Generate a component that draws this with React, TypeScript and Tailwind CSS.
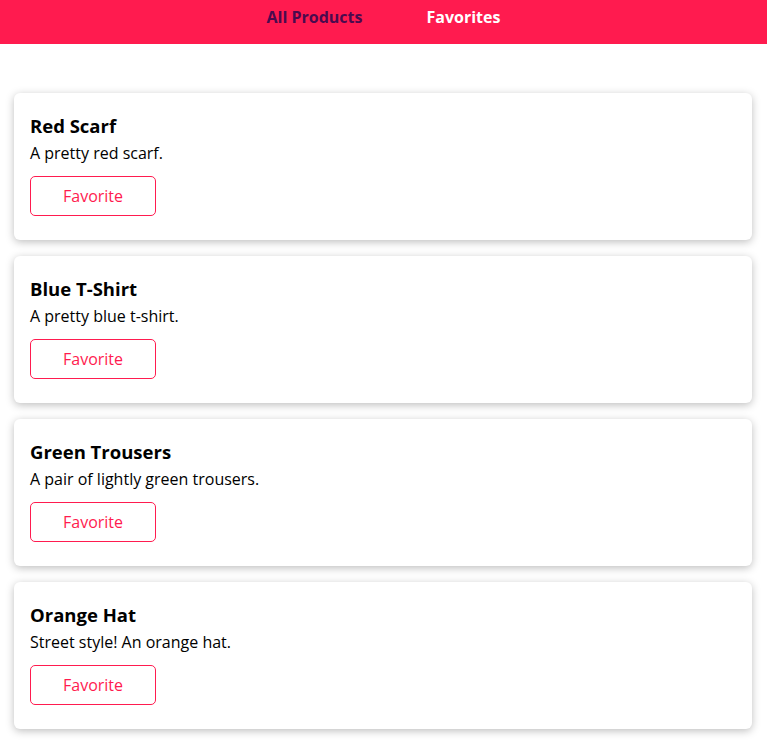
const products = [
  { id: "p1", title: "Red Scarf", description: "A pretty red scarf." },
  { id: "p2", title: "Blue T-Shirt", description: "A pretty blue t-shirt." },
  { id: "p3", title: "Green Trousers", description: "A pair of lightly green trousers." },
  { id: "p4", title: "Orange Hat", description: "Street style! An orange hat." },
];

function Navigation() {
  return (
    <header className="w-full h-[44px] bg-[#ff1b4f]">
      <nav className="h-full">
        <ul className="h-full flex items-center justify-center gap-16 pb-[10px]">
          <li>
            <a href="#" className="font-bold text-[16px] text-[#4b0a4e]">
              All Products
            </a>
          </li>
          <li>
            <a href="#" className="font-bold text-[16px] text-white">
              Favorites
            </a>
          </li>
        </ul>
      </nav>
    </header>
  );
}

function ProductItem({ title, description }: { title: string; description: string }) {
  return (
    <li className="bg-white rounded-[6px] shadow-[0_2px_8px_rgba(0,0,0,0.26)] px-4 pt-[18px] pb-6">
      <h2 className="text-[18.5px] font-bold leading-[30px] text-black">{title}</h2>
      <p className="text-[16px] leading-[24px] text-black">{description}</p>
      <button className="mt-[11px] w-[126px] h-[40px] rounded-[5px] border border-[#ff1b4f] text-[#ff1b4f] text-[16px] bg-white">
        Favorite
      </button>
    </li>
  );
}

export default function App() {
  return (
    <div className="min-h-screen bg-white font-['Open_Sans',sans-serif]">
      <Navigation />
      <main className="pt-[49px] pl-[14px] pr-[15px]">
        <ul className="flex flex-col gap-4">
          {products.map((p) => (
            <ProductItem key={p.id} title={p.title} description={p.description} />
          ))}
        </ul>
      </main>
    </div>
  );
}
